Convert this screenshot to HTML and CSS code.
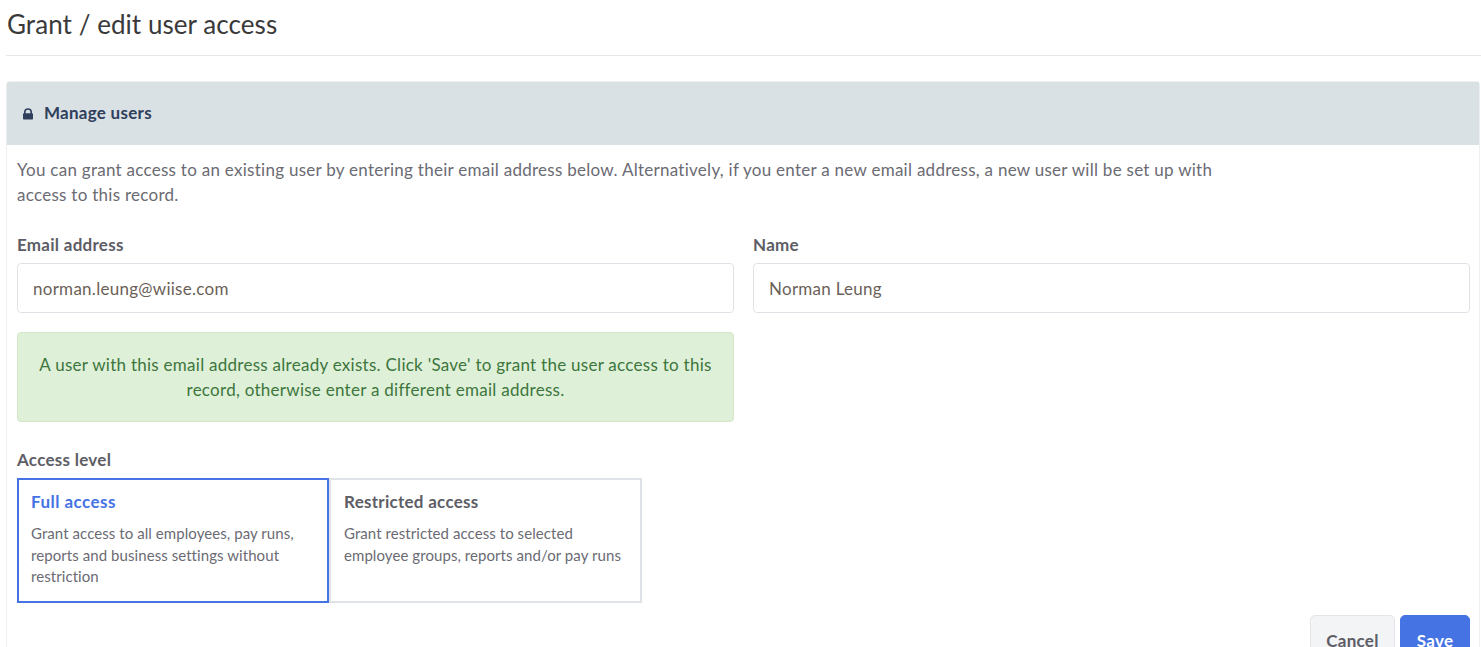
FILE: index.html
```html
<!DOCTYPE html>
<html lang="en">
<head>
<meta charset="utf-8">
<title>Grant / edit user access</title>
<link rel="stylesheet" href="styles.css">
</head>
<body>
<header class="page-head"><h1>Grant / edit user access</h1></header>
<section class="card">
  <div class="card-head">
    <svg class="lock" viewBox="0 0 12 12" width="12" height="12" aria-hidden="true"><path fill-rule="evenodd" d="M2 5.2V4a4 3.8 0 0 1 8 0v1.2h.2c.5 0 .8.4.8.8v4.7c0 .5-.3.8-.8.8H1.8c-.5 0-.8-.3-.8-.8V6c0-.4.3-.8.8-.8zm1.6 0h4.8V4a2.4 2.3 0 0 0-4.8 0z"/></svg>
    <span class="card-title">Manage users</span>
  </div>
  <div class="card-body">
    <p class="intro">You can grant access to an existing user by entering their email address below. Alternatively, if you enter a new email address, a new user will be set up with access to this record.</p>
    <div class="fields">
      <div class="field">
        <label class="label" for="email">Email address</label>
        <input class="input" id="email" type="text" value="norman.leung@wiise.com">
        <div class="alert">A user with this email address already exists. Click 'Save' to grant the user access to this record, otherwise enter a different email address.</div>
      </div>
      <div class="field">
        <label class="label" for="name">Name</label>
        <input class="input" id="name" type="text" value="Norman Leung">
      </div>
    </div>
    <div class="label access-label">Access level</div>
    <div class="options">
      <div class="option selected">
        <div class="option-title">Full access</div>
        <div class="option-text">Grant access to all employees, pay runs, reports and business settings without restriction</div>
      </div>
      <div class="option">
        <div class="option-title">Restricted access</div>
        <div class="option-text">Grant restricted access to selected employee groups, reports and/or pay runs</div>
      </div>
    </div>
    <div class="actions">
      <button class="btn btn-cancel" type="button">Cancel</button>
      <button class="btn btn-save" type="button">Save</button>
    </div>
  </div>
</section>
</body>
</html>
```

FILE: styles.css
```css
html { overflow: hidden; }
body {
  margin: 0;
  background: #fff;
  font-family: Lato, "Open Sans", sans-serif;
  font-size: 17px;
  letter-spacing: 0.27px;
  line-height: 25px;
  color: #6b6b73;
}
.page-head {
  margin-left: 6px;
  height: 55px;
  border-bottom: 1px solid #e4e6e8;
}
h1 {
  margin: 0;
  padding: 8px 0 0 1px;
  font-size: 26px;
  letter-spacing: 0.06px;
  line-height: 32px;
  font-weight: 400;
  color: #3a3a3a;
}
.card {
  margin: 25px 1px 0 6px;
  border: 1px solid #eeeff0;
  border-radius: 4px;
}
.card-head {
  height: 63px;
  display: flex;
  align-items: center;
  gap: 9px;
  padding-left: 15px;
  background: #dae1e5;
  font-weight: 700;
  color: #2f3f5c;
}
.card-title { margin: 0 0 2px 1px; }
.lock { fill: #2f3f5c; }
.card-body { padding: 12px 9px 20px 10px; }
.intro { margin: 0; max-width: 1215px; }
.fields {
  display: grid;
  grid-template-columns: 717px 717px;
  gap: 19px;
  margin-top: 25px;
}
.label {
  display: block;
  font-weight: 700;
  color: #5d5d66;
  height: 31px;
}
.input {
  display: block;
  box-sizing: border-box;
  width: 100%;
  height: 50px;
  padding: 0 15px;
  border: 1px solid #dfe3e7;
  border-radius: 4px;
  font: inherit;
  letter-spacing: inherit;
  color: #6b5f58;
  background: #fff;
  outline: none;
}
.alert {
  box-sizing: border-box;
  height: 90px;
  margin-top: 19px;
  padding: 19px 15px;
  border: 1px solid #d3e6c8;
  border-radius: 4px;
  background: #dff0d8;
  color: #3c763d;
  text-align: center;
}
.access-label { margin-top: 25px; height: 31px; }
.options { display: flex; }
.option {
  box-sizing: border-box;
  width: 313px;
  height: 125px;
  padding: 9px 13px;
  border: 2px solid #dfe3e7;
  font-size: 15px;
  letter-spacing: 0.07px;
  line-height: 21.5px;
}
.option.selected { width: 312px; border-color: #4573e3; padding-left: 12px; padding-right: 14px; }
.option-title {
  font-size: 17px;
  letter-spacing: 0.27px;
  line-height: 25px;
  font-weight: 700;
  color: #5d5d66;
  margin-bottom: 9px;
}
.selected .option-title { color: #4573e3; letter-spacing: 0.45px; }
.actions {
  display: flex;
  justify-content: flex-end;
  gap: 5px;
  margin-top: 12px;
}
.btn {
  height: 50px;
  border-radius: 5px;
  font: inherit;
  letter-spacing: inherit;
  font-weight: 700;
}
.btn-cancel { width: 85px; border: 1px solid #e3e5e8; background: #f3f4f6; color: #5d5d66; }
.btn-save { width: 70px; border: 1px solid #4573e3; background: #4573e3; color: #fff; }
```
